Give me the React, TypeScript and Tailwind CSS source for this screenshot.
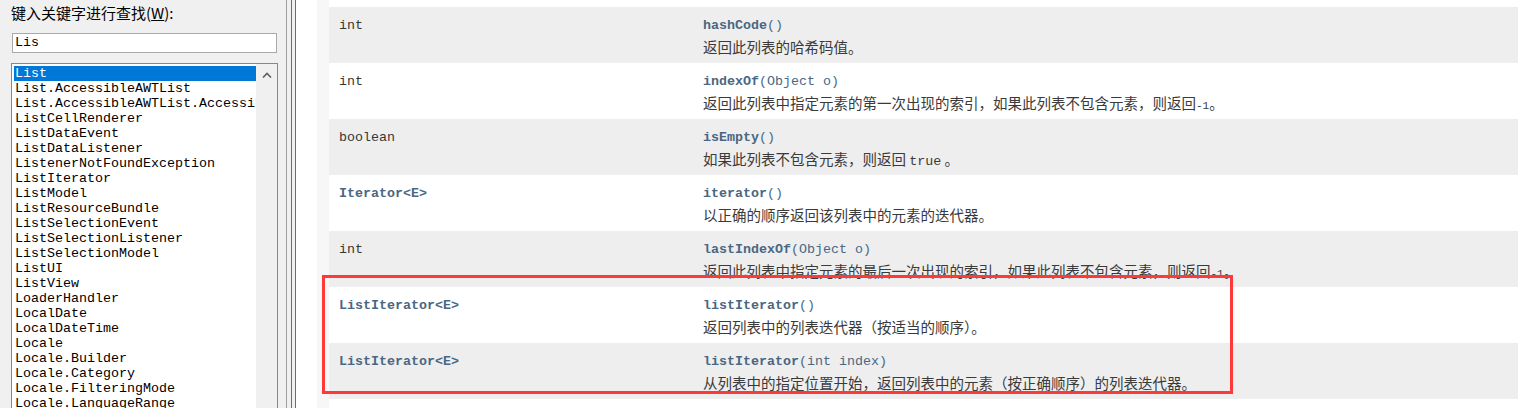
import React from "react"

const LIST_ITEMS = [
  "List",
  "List.AccessibleAWTList",
  "List.AccessibleAWTList.AccessibleAWTListChild",
  "ListCellRenderer",
  "ListDataEvent",
  "ListDataListener",
  "ListenerNotFoundException",
  "ListIterator",
  "ListModel",
  "ListResourceBundle",
  "ListSelectionEvent",
  "ListSelectionListener",
  "ListSelectionModel",
  "ListUI",
  "ListView",
  "LoaderHandler",
  "LocalDate",
  "LocalDateTime",
  "Locale",
  "Locale.Builder",
  "Locale.Category",
  "Locale.FilteringMode",
  "Locale.LanguageRange",
]

type Row = {
  type: React.ReactNode
  name: string
  params: string
  desc: React.ReactNode
}

const Code = ({ children }: { children: React.ReactNode }) => (
  <span className="font-['Liberation_Mono',monospace] text-[13.33px]">{children}</span>
)

const MinusOne = () => (
  <span className="font-['Liberation_Mono',monospace] text-[11px]">-1</span>
)

const ROWS: Row[] = [
  { type: "int", name: "hashCode", params: "()", desc: "返回此列表的哈希码值。" },
  {
    type: "int",
    name: "indexOf",
    params: "(Object o)",
    desc: (
      <>
        返回此列表中指定元素的第一次出现的索引，如果此列表不包含元素，则返回<MinusOne />。
      </>
    ),
  },
  {
    type: "boolean",
    name: "isEmpty",
    params: "()",
    desc: (
      <>
        如果此列表不包含元素，则返回 <Code>true</Code> 。
      </>
    ),
  },
  {
    type: <span className="font-bold text-[#4a6782]">Iterator&lt;E&gt;</span>,
    name: "iterator",
    params: "()",
    desc: "以正确的顺序返回该列表中的元素的迭代器。",
  },
  {
    type: "int",
    name: "lastIndexOf",
    params: "(Object o)",
    desc: (
      <>
        返回此列表中指定元素的最后一次出现的索引，如果此列表不包含元素，则返回<MinusOne />。
      </>
    ),
  },
  {
    type: <span className="font-bold text-[#4a6782]">ListIterator&lt;E&gt;</span>,
    name: "listIterator",
    params: "()",
    desc: "返回列表中的列表迭代器（按适当的顺序）。",
  },
  {
    type: <span className="font-bold text-[#4a6782]">ListIterator&lt;E&gt;</span>,
    name: "listIterator",
    params: "(int index)",
    desc: "从列表中的指定位置开始，返回列表中的元素（按正确顺序）的列表迭代器。",
  },
]

const SearchPane = () => {
  return (
    <div className="flex w-[278px] shrink-0 flex-col bg-[#f0f0f0] pl-[11px] pt-[3px]">
      <div className="font-['Noto_Sans_CJK_SC',sans-serif] text-[15px] leading-[20px] text-black">
        键入关键字进行查找(<span className="underline">W</span>):
      </div>
      <div className="ml-[1px] mt-[10px] flex h-[20px] w-[265px] shrink-0 items-center border border-[#a9a9a9] bg-white pl-[2px] font-['Liberation_Mono',monospace] text-[13.33px] text-black">
        Lis
      </div>
      <div className="mt-[10px] flex w-[267px] flex-1 border border-[#828790] bg-white">
        <div className="flex min-w-0 flex-1 flex-col overflow-hidden pl-[2px] pt-[2px]">
          {LIST_ITEMS.map((item, i) => (
            <div
              key={item}
              className={
                i === 0
                  ? "h-[15px] shrink-0 overflow-hidden whitespace-nowrap bg-[#0078d7] pl-[1px] font-['Liberation_Mono',monospace] text-[13.33px] leading-[15px] text-white"
                  : "h-[15px] shrink-0 overflow-hidden whitespace-nowrap pl-[1px] font-['Liberation_Mono',monospace] text-[13.33px] leading-[15px] text-black"
              }
            >
              {item}
            </div>
          ))}
        </div>
        <div className="w-[21px] shrink-0 bg-[#f0f0f0]">
          <div className="flex h-[22px] items-center justify-center">
            <svg width="10" height="6" viewBox="0 0 10 6" fill="none">
              <path d="M1 5.5 L5 1.5 L9 5.5" stroke="#606060" strokeWidth="1.6" />
            </svg>
          </div>
        </div>
      </div>
    </div>
  )
}

const Splitter = () => (
  <div className="flex w-[18px] shrink-0 bg-[#f0f0f0] pl-[8px]">
    <div className="w-px bg-[#a0a0a0]" />
    <div className="ml-[4px] w-px bg-[#6d6d6d]" />
    <div className="ml-[3px] w-px bg-[#6d6d6d]" />
  </div>
)

const MemberRow = ({ row, alt }: { row: Row; alt: boolean }) => {
  return (
    <div className={alt ? "flex h-[56px] shrink-0 bg-[#eeeeef]" : "flex h-[56px] shrink-0 bg-white"}>
      <div className="w-[374px] shrink-0 pl-[10px] pt-[10px] font-['Liberation_Mono',monospace] text-[13.33px] leading-[18px] text-[#353833]">
        {row.type}
      </div>
      <div className="flex flex-col pt-[10px]">
        <div className="whitespace-nowrap font-['Liberation_Mono',monospace] text-[13.33px] leading-[18px] text-[#4a6782]">
          <span className="font-bold">{row.name}</span>
          {row.params}
        </div>
        <div className="mt-[2px] whitespace-nowrap font-['Noto_Sans_CJK_SC',sans-serif] text-[14.5px] leading-[20px] text-[#3a3a3a]">
          {row.desc}
        </div>
      </div>
    </div>
  )
}

const DocPane = () => {
  return (
    <div className="flex flex-1 bg-white pl-[21px]">
      <div className="w-[12px] shrink-0 bg-[#f7f7f7]" />
      <div className="flex flex-1 flex-col overflow-hidden pt-[7px]">
        {ROWS.map((row, i) => (
          <MemberRow key={i} row={row} alt={i % 2 === 0} />
        ))}
        <div className="h-[56px] shrink-0 bg-white" />
      </div>
    </div>
  )
}

export default function App() {
  return (
    <div className="relative flex h-[408px] w-[1518px] overflow-hidden bg-white">
      <SearchPane />
      <Splitter />
      <DocPane />
      {/* highlight marker drawn over the two listIterator rows */}
      <div className="pointer-events-none absolute left-[322px] top-[275px] h-[119px] w-[911px] border-[3px] border-[#ff3838]" />
    </div>
  )
}
